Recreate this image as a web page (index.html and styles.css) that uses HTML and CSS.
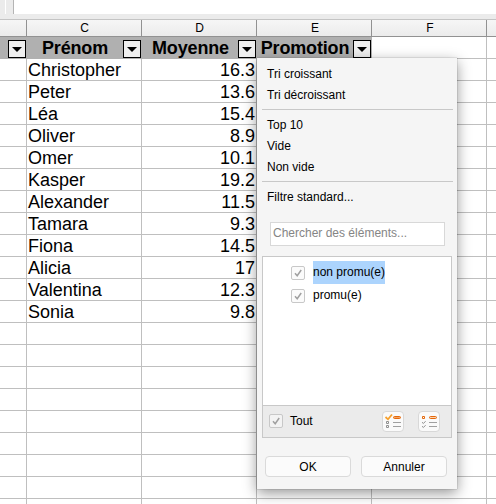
FILE: index.html
```html
<!DOCTYPE html>
<html lang="fr">
<head>
<meta charset="utf-8">
<title>Notes</title>
<link rel="stylesheet" href="styles.css">
</head>
<body>
<div class="formula-bar"><div class="formula-input"></div></div>
<div class="row letters"><div></div><div>C</div><div>D</div><div>E</div><div>F</div><div></div></div>
<div class="sheet">
  <div class="row titles">
    <div class="head"><span class="drop"></span></div>
    <div class="head"><b>Prénom</b><span class="drop"></span></div>
    <div class="head"><b>Moyenne</b><span class="drop"></span></div>
    <div class="head"><b>Promotion</b><span class="drop"></span></div>
    <div></div><div></div>
  </div>
  <div class="row"><div></div><div>Christopher</div><div class="num">16.3</div><div></div><div></div><div></div></div>
  <div class="row"><div></div><div>Peter</div><div class="num">13.6</div><div></div><div></div><div></div></div>
  <div class="row"><div></div><div>Léa</div><div class="num">15.4</div><div></div><div></div><div></div></div>
  <div class="row"><div></div><div>Oliver</div><div class="num">8.9</div><div></div><div></div><div></div></div>
  <div class="row"><div></div><div>Omer</div><div class="num">10.1</div><div></div><div></div><div></div></div>
  <div class="row"><div></div><div>Kasper</div><div class="num">19.2</div><div></div><div></div><div></div></div>
  <div class="row"><div></div><div>Alexander</div><div class="num">11.5</div><div></div><div></div><div></div></div>
  <div class="row"><div></div><div>Tamara</div><div class="num">9.3</div><div></div><div></div><div></div></div>
  <div class="row"><div></div><div>Fiona</div><div class="num">14.5</div><div></div><div></div><div></div></div>
  <div class="row"><div></div><div>Alicia</div><div class="num">17</div><div></div><div></div><div></div></div>
  <div class="row"><div></div><div>Valentina</div><div class="num">12.3</div><div></div><div></div><div></div></div>
  <div class="row"><div></div><div>Sonia</div><div class="num">9.8</div><div></div><div></div><div></div></div>
  <div class="row"><div></div><div></div><div></div><div></div><div></div><div></div></div>
  <div class="row"><div></div><div></div><div></div><div></div><div></div><div></div></div>
  <div class="row"><div></div><div></div><div></div><div></div><div></div><div></div></div>
  <div class="row"><div></div><div></div><div></div><div></div><div></div><div></div></div>
  <div class="row"><div></div><div></div><div></div><div></div><div></div><div></div></div>
  <div class="row"><div></div><div></div><div></div><div></div><div></div><div></div></div>
  <div class="row"><div></div><div></div><div></div><div></div><div></div><div></div></div>
  <div class="row"><div></div><div></div><div></div><div></div><div></div><div></div></div>
  <div class="row"><div></div><div></div><div></div><div></div><div></div><div></div></div>
</div>
<div class="popup">
  <ul class="menu">
    <li>Tri croissant</li><li>Tri décroissant</li>
  </ul>
  <ul class="menu">
    <li>Top 10</li><li>Vide</li><li>Non vide</li>
  </ul>
  <ul class="menu last">
    <li>Filtre standard...</li>
  </ul>
  <div class="search">Chercher des éléments...</div>
  <div class="list">
    <div class="items">
      <div class="item"><span class="check"><svg viewBox="0 0 14 14"><path d="M4 7.2 6.2 9.8 10.2 4"/></svg></span><span class="label selected">non promu(e)</span></div>
      <div class="item"><span class="check"><svg viewBox="0 0 14 14"><path d="M4 7.2 6.2 9.8 10.2 4"/></svg></span><span class="label">promu(e)</span></div>
    </div>
    <div class="all">
      <span class="check"><svg viewBox="0 0 14 14"><path d="M4 7.2 6.2 9.8 10.2 4"/></svg></span><span class="all-label">Tout</span>
      <span class="tool"><svg viewBox="0 0 22 22" fill="none">
        <path d="M3.5 6 6 8.3 10 3.5" stroke="#f7a02c" stroke-width="1.8"/>
        <rect x="11.5" y="5.5" width="7" height="2" rx="1" fill="#f4a460" stroke="#e5680b"/>
        <path d="M4.5 10.5h2v2h-2zM4.5 14.5h2v2h-2z" stroke="#909090"/>
        <path d="M11 11.5h8M11 15.5h8" stroke="#a0a0a0"/>
      </svg></span>
      <span class="tool"><svg viewBox="0 0 22 22" fill="none">
        <path d="M4.5 5.5h2v2h-2z" stroke="#e5680b"/>
        <rect x="11.5" y="5.5" width="7" height="2" rx="1" fill="#fbd2ae" stroke="#e5680b"/>
        <path d="M4 11.2 5.4 12.5 7.6 10.2M4 15.2 5.4 16.5 7.6 14.2" stroke="#909090"/>
        <path d="M11 11.5h8M11 15.5h8" stroke="#a0a0a0"/>
      </svg></span>
    </div>
  </div>
  <div class="buttons"><span class="button">OK</span><span class="button">Annuler</span></div>
</div>
</body>
</html>
```
FILE: styles.css
```css
* { box-sizing: border-box; }
body {
  margin: 0;
  width: 496px;
  height: 504px;
  overflow: hidden;
  background: #fff;
  color: #000;
  font-family: "Liberation Sans", Arial, sans-serif;
}
.formula-bar {
  height: 19px;
  padding: 0 0 5px 5px;
  background: #ebebeb;
}
.formula-input {
  height: 14px;
  margin-left: 8px;
  border-left: 1px solid #b4b4b4;
  background: #fff;
  box-shadow: -7px 0 0 #ebebeb, -8px 0 0 #fff;
}
.row {
  display: grid;
  grid-template-columns: 27px 115px 115px 115px 115px 9px;
  grid-template-rows: 100%;
  height: 22px;
  font-size: 18px;
  line-height: 23px;
}
.row > div {
  border-right: 1px solid #bfbfbf;
  border-bottom: 1px solid #bfbfbf;
  padding-left: 1px;
  white-space: nowrap;
}
.row > div:last-child { border-right: 0; }
.row > .num { padding-right: 1px; text-align: right; }
.row.letters {
  height: 18px;
  font-size: 12px;
  line-height: 16px;
  text-align: center;
  background: linear-gradient(#f6f6f6, #ebebeb);
  border-top: 1px solid #c4c4c4;
}
.row.letters > div { border-color: #929292; }
.row.letters > div:nth-child(n+4) { padding-left: 2px; }
.row.titles { line-height: 22px; }
.titles > .head {
  display: flex;
  align-items: flex-start;
  justify-content: flex-end;
  padding: 0;
  background: #b0b0b0;
  border-color: #b0b0b0;
}
.head b { flex: 1; text-align: center; letter-spacing: -0.15px; }
.head:nth-child(3) b { padding-left: 1px; }
.drop {
  width: 18px;
  height: 18px;
  margin-top: 3px;
  border: 1px solid #000;
  background: #efefef;
  display: flex;
  align-items: center;
  justify-content: center;
}
.drop::after {
  content: "";
  border: 5px solid transparent;
  border-top-color: #000;
  border-bottom: 0;
}
.popup {
  position: absolute;
  left: 257px;
  top: 58px;
  width: 200px;
  height: 431px;
  padding: 5px;
  background: #f5f5f5;
  box-shadow: 0 0 1px rgba(0,0,0,.45), 0 4px 13px rgba(0,0,0,.42);
  font-size: 12px;
}
.menu {
  list-style: none;
  margin: 0 -1px 0 0;
  padding: 1px 5px 3px;
  border-bottom: 1px solid #c8c8c8;
  line-height: 21px;
}
.menu + .menu { padding-top: 5px; }
.menu.last { border: 0; padding-bottom: 0; }
.search {
  margin: 14px 7px 0 8px;
  height: 24px;
  padding-left: 2px;
  border: 1px solid #d8d8d8;
  background: #fff;
  color: #858585;
  line-height: 21px;
}
.list {
  margin-top: 10px;
  height: 182px;
  border: 1px solid #c8c8c8;
  background: #fff;
  display: flex;
  flex-direction: column;
}
.items { flex: 1; padding-top: 4px; }
.item { display: flex; height: 23px; padding-left: 28px; }
.item .check { margin-top: 5px; }
.check {
  width: 14px;
  height: 14px;
  border: 1px solid #c8c8c8;
  border-radius: 2px;
  background: #fbfbfb;
}
.check svg { display: block; width: 14px; height: 14px; margin: -1px; fill: none; stroke: #a0a0a0; stroke-width: 1.5; }
.label { height: 23px; line-height: 22px; margin-left: 8px; }
.selected { background: #acd4fd; }
.all {
  display: flex;
  align-items: flex-start;
  height: 32px;
  padding: 5px 11px 0 6px;
  border-top: 1px solid #c8c8c8;
  background: #ebebeb;
}
.all .check { margin-top: 3px; background: #f3f3f3; }
.all-label { flex: 1; margin-left: 7px; line-height: 20px; }
.tool {
  width: 22px;
  height: 21px;
  border: 1px solid #d8d8d8;
  border-radius: 4px;
  background: #fafafa;
}
.tool + .tool { margin-left: 14px; }
.tool svg { display: block; width: 22px; height: 22px; margin: -1px; }
.buttons { display: flex; gap: 10px; padding: 18px 5px 0 3px; }
.button {
  width: 86px;
  height: 21px;
  border: 1px solid #dadada;
  border-radius: 4px;
  background: #fbfbfb;
  line-height: 20px;
  text-align: center;
}
```
